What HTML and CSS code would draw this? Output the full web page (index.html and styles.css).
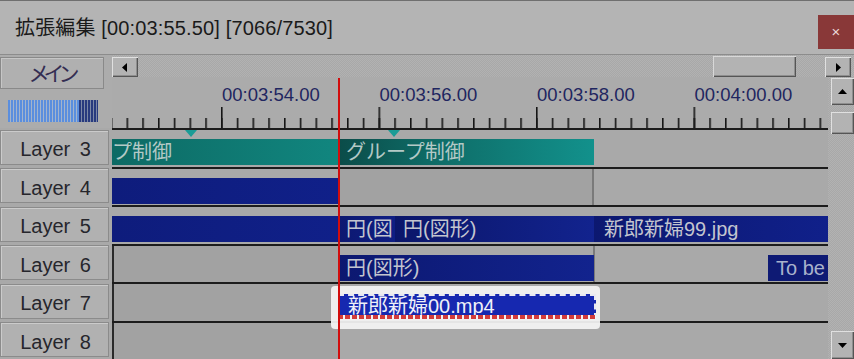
FILE: index.html
```html
<!DOCTYPE html>
<html>
<head>
<meta charset="utf-8">
<link rel="stylesheet" href="styles.css">
</head>
<body>
<div class="titlebar">
  <span class="title">拡張編集 [00:03:55.50] [7066/7530]</span>
  <div class="close">×</div>
</div>
<div class="main">
  <div class="side">
    <div class="side-top">
      <div class="main-btn">メイン</div>
      <div class="meter"><div class="meter-lit"></div><div class="meter-dark"></div></div>
    </div>
    <div class="layer-head"><div class="layer-btn">Layer 3</div></div>
    <div class="layer-head"><div class="layer-btn">Layer 4</div></div>
    <div class="layer-head"><div class="layer-btn">Layer 5</div></div>
    <div class="layer-head"><div class="layer-btn">Layer 6</div></div>
    <div class="layer-head"><div class="layer-btn">Layer 7</div></div>
    <div class="layer-head"><div class="layer-btn">Layer 8</div></div>
  </div>
  <div class="work">
    <div class="hscroll">
      <div class="sbtn hleft"><svg width="6" height="9" viewBox="0 0 6 9"><path d="M5 0 L0 4.5 L5 9 Z" fill="#000"/></svg></div>
      <div class="htrack"><div class="hthumb"></div></div>
      <div class="sbtn hright"><svg width="6" height="9" viewBox="0 0 6 9"><path d="M1 0 L6 4.5 L1 9 Z" fill="#000"/></svg></div>
    </div>
    <div class="lower">
      <div class="timeline">
        <div class="ruler">
          <svg class="ticks" width="716" height="51" viewBox="0 0 716 51">
            <defs>
              <pattern id="minor" x="14.5" y="0" width="15.75" height="51" patternUnits="userSpaceOnUse">
                <rect x="0" y="41" width="1.6" height="10" fill="#161616"/>
              </pattern>
              <pattern id="major" x="109" y="0" width="157.5" height="51" patternUnits="userSpaceOnUse">
                <rect x="0" y="30" width="1.6" height="21" fill="#161616"/>
              </pattern>
            </defs>
            <rect x="0" y="0" width="716" height="51" fill="url(#minor)"/>
            <rect x="0" y="0" width="716" height="51" fill="url(#major)"/>
          </svg>
          <span class="tlabel l1">00:03:54.00</span>
          <span class="tlabel l2">00:03:56.00</span>
          <span class="tlabel l3">00:03:58.00</span>
          <span class="tlabel l4">00:04:00.00</span>
        </div>
        <div class="row">
          <div class="clip teal ca"><span class="ctext cut">プ制御</span></div>
          <div class="clip teal cb"><span class="ctext">グループ制御</span></div>
          <span class="marker m1"></span>
          <span class="marker m2"></span>
        </div>
        <div class="row">
          <div class="shade r4"></div>
          <div class="clip blue ca"></div>
        </div>
        <div class="row">
          <div class="clip blue ca"></div>
          <div class="clip blue c5a"><span class="ctext">円(図</span></div>
          <div class="clip blue c5b"><span class="ctext">円(図形)</span></div>
          <div class="clip blue c5c"><span class="ctext">新郎新婦99.jpg</span></div>
        </div>
        <div class="row">
          <div class="shade left"></div>
          <div class="vline"></div>
          <div class="clip blue cb"><span class="ctext">円(図形)</span></div>
          <div class="clip blue ctobe"><span class="ctext">To be</span></div>
        </div>
        <div class="row">
          <div class="shade left"></div>
          <div class="clip sel"><span class="ctext">新郎新婦00.mp4</span></div>
        </div>
        <div class="row">
          <div class="shade left"></div>
        </div>
        <div class="focus"></div>
        <div class="playhead"></div>
      </div>
      <div class="vscroll">
        <div class="sbtn vup"><svg width="9" height="6" viewBox="0 0 9 6"><path d="M0 5 L4.5 0 L9 5 Z" fill="#000"/></svg></div>
        <div class="sbtn vthumb"></div>
        <div class="sbtn vdown"><svg width="9" height="6" viewBox="0 0 9 6"><path d="M0 1 L4.5 6 L9 1 Z" fill="#000"/></svg></div>
      </div>
    </div>
  </div>
</div>
</body>
</html>
```

FILE: styles.css
```css
* { box-sizing: border-box; }
body {
  margin: 0;
  width: 854px;
  height: 359px;
  overflow: hidden;
  background: #aaaaaa;
  font-family: "Liberation Sans", "Noto Sans CJK JP", sans-serif;
}
.titlebar {
  height: 55px;
  border-top: 1px solid #6f6f6f;
  border-bottom: 1px solid #8c8c8c;
  background: #b4b4b4;
  display: flex;
  align-items: flex-start;
  padding-left: 15px;
}
.title {
  margin-top: 16px;
  font-size: 20px;
  line-height: 23px;
  letter-spacing: 0.15px;
  color: #1a1a1a;
}
.close {
  margin-left: auto;
  margin-top: 14px;
  width: 36px;
  height: 34px;
  background: #893838;
  color: #e9d6d6;
  font-size: 15px;
  line-height: 34px;
  text-align: center;
}
.main {
  display: flex;
  height: 304px;
}
.side {
  width: 112px;
  display: flex;
  flex-direction: column;
  background: #b0b0b0;
}
.side-top {
  height: 73px;
  flex: none;
  background: #acacac;
}
.main-btn {
  margin-top: 2px;
  width: 104px;
  height: 32px;
  border: 1px solid #898989;
  background: #b0b0b0;
  box-shadow: inset 1px 1px #c6c6c6;
  text-align: center;
  font-family: "Noto Sans CJK JP", sans-serif;
  font-size: 21px;
  line-height: 29px;
  letter-spacing: -6px;
  padding-right: 2px;
  color: #332d52;
}
.meter {
  margin: 11px 0 0 8px;
  width: 90px;
  height: 22px;
  display: flex;
}
.meter-lit {
  width: 71px;
  background: repeating-linear-gradient(to right, #5a8ede 0 2px, #a3b4cc 2px 3px);
}
.meter-dark {
  width: 19px;
  background: repeating-linear-gradient(to right, #283a7e 0 2px, #7c88a6 2px 3px);
}
.layer-head {
  height: 38.5px;
  flex: none;
  padding-top: 1.5px;
  background: #a9a9a9;
}
.layer-btn {
  width: 109px;
  height: 35px;
  border: 1px solid #8b8b8b;
  background: #b1b1b1;
  box-shadow: inset 1px 1px #cbcbcb;
  text-align: center;
  font-size: 20px;
  line-height: 23px;
  padding-top: 7.5px;
  padding-left: 2px;
  word-spacing: 4px;
  color: #26262c;
}
.work {
  flex: 1;
  display: flex;
  flex-direction: column;
}
.hscroll {
  height: 22px;
  flex: none;
  display: flex;
  background: repeating-conic-gradient(#b2b2b2 0 25%, #a8a8a8 0 50%) 0 0 / 2px 2px;
}
.sbtn {
  background: #b3b3b3;
  box-shadow: inset 1px 1px #e0e0e0, inset -1px -1px #555555, inset -2px -2px #8e8e8e;
  display: flex;
  align-items: center;
  justify-content: center;
}
.hleft {
  margin-top: 2px;
  width: 26px;
  height: 20px;
}
.htrack {
  flex: 1;
}
.hthumb {
  margin-left: 575px;
  margin-top: 1px;
  width: 83px;
  height: 21px;
  background: #b3b3b3;
  box-shadow: inset 1px 1px #d8d8d8, inset -1px -1px #555555, inset -2px -2px #8e8e8e;
}
.hright {
  margin-top: 2px;
  margin-right: 3px;
  width: 26px;
  height: 20px;
}
.lower {
  flex: 1;
  display: flex;
}
.timeline {
  width: 716px;
  position: relative;
  overflow: hidden;
  background: #a9a9a9;
}
.ruler {
  height: 51px;
  position: relative;
  background: #ababab;
}
.ticks {
  display: block;
}
.tlabel {
  position: absolute;
  top: 8px;
  font-size: 18.5px;
  line-height: 20px;
  color: #1f2660;
}
.l1 { left: 110px; }
.l2 { left: 267.5px; }
.l3 { left: 425px; }
.l4 { left: 582.5px; }
.row {
  height: 38.5px;
  border-top: 2px solid #1c1c1c;
  position: relative;
  background: #a9a9a9;
}
.shade {
  position: absolute;
  top: 0;
  bottom: 0;
  background: #a2a2a2;
}
.shade.left {
  left: 0;
  width: 226px;
  border-left: 2px solid #2a2a2a;
}
.shade.r4 {
  left: 226px;
  width: 256px;
  border-right: 2px solid #7a7a7a;
}
.vline {
  position: absolute;
  left: 481px;
  top: 0;
  bottom: 0;
  width: 2px;
  background: #7a7a7a;
}
.clip {
  position: absolute;
  top: 9px;
  height: 26px;
  overflow: hidden;
  white-space: nowrap;
}
.ctext {
  display: block;
  padding-left: 8px;
  font-size: 20px;
  line-height: 26px;
  color: #c3c5cf;
}
.ctext.cut {
  padding-left: 0;
}
.teal .ctext { color: #b3c9c6; }
.teal.ca { left: 0; width: 226px; background: linear-gradient(90deg, #0d6a64, #11867f); }
.teal.cb { left: 226px; width: 256px; background: linear-gradient(90deg, #0b4c49 0%, #0e6a65 35%, #12918c 100%); box-shadow: inset 1px 0 #2fb3a8; }
.blue.ca { left: 0; width: 226px; background: linear-gradient(90deg, #0e1c7c, #102089); }
.blue.cb { left: 226px; width: 256px; background: linear-gradient(90deg, #0c1870, #12238e); box-shadow: inset 1px 0 #2fb3a8; }
.blue.c5a { left: 226px; width: 57px; background: linear-gradient(90deg, #0c1870, #0f1e84); box-shadow: inset 1px 0 #2fb3a8; }
.blue.c5b { left: 283px; width: 199px; background: linear-gradient(90deg, #0b166a, #12238e); }
.blue.c5c { left: 482px; width: 234px; background: linear-gradient(90deg, #0c1870, #10208a); padding-left: 2px; }
.blue.ctobe { left: 656px; width: 60px; background: #0e1a74; }
.ctobe .ctext { color: #a9b2cc; }
.marker {
  position: absolute;
  top: 0;
  width: 0;
  height: 0;
  border-left: 6px solid transparent;
  border-right: 6px solid transparent;
  border-top: 7px solid #1b9c96;
}
.m1 { left: 73px; }
.m2 { left: 276px; }
.focus {
  position: absolute;
  left: 219px;
  top: 209px;
  width: 269px;
  height: 43px;
  border-radius: 4px;
  background: rgba(244, 244, 244, 0.93);
}
.clip.sel {
  left: 226px;
  width: 258px;
  top: 10px;
  height: 25px;
  background: #1628b0;
  border-top: 2px dashed #e8e8f0;
  border-right: 2px dashed #e8e8f0;
  z-index: 2;
  overflow: visible;
}
.clip.sel::after {
  content: "";
  position: absolute;
  left: 0;
  right: -2px;
  bottom: 0;
  height: 4px;
  background: repeating-linear-gradient(to right, #d23b3b 0 5px, #f4f4f4 5px 7px);
}
.sel .ctext {
  color: #eef0f8;
  line-height: 20px;
  padding-left: 10px;
}
.playhead {
  position: absolute;
  left: 226px;
  top: 1px;
  bottom: 0;
  width: 1.5px;
  background: #d20d0d;
  z-index: 3;
}
.vscroll {
  width: 26px;
  display: flex;
  flex-direction: column;
  align-items: flex-end;
  background: repeating-conic-gradient(#b2b2b2 0 25%, #a8a8a8 0 50%) 0 0 / 2px 2px;
}
.vup {
  margin-top: 1px;
  width: 23px;
  height: 27px;
}
.vthumb {
  margin-top: 7px;
  width: 23px;
  height: 22px;
}
.vdown {
  margin-top: auto;
  width: 23px;
  height: 28px;
}
```
